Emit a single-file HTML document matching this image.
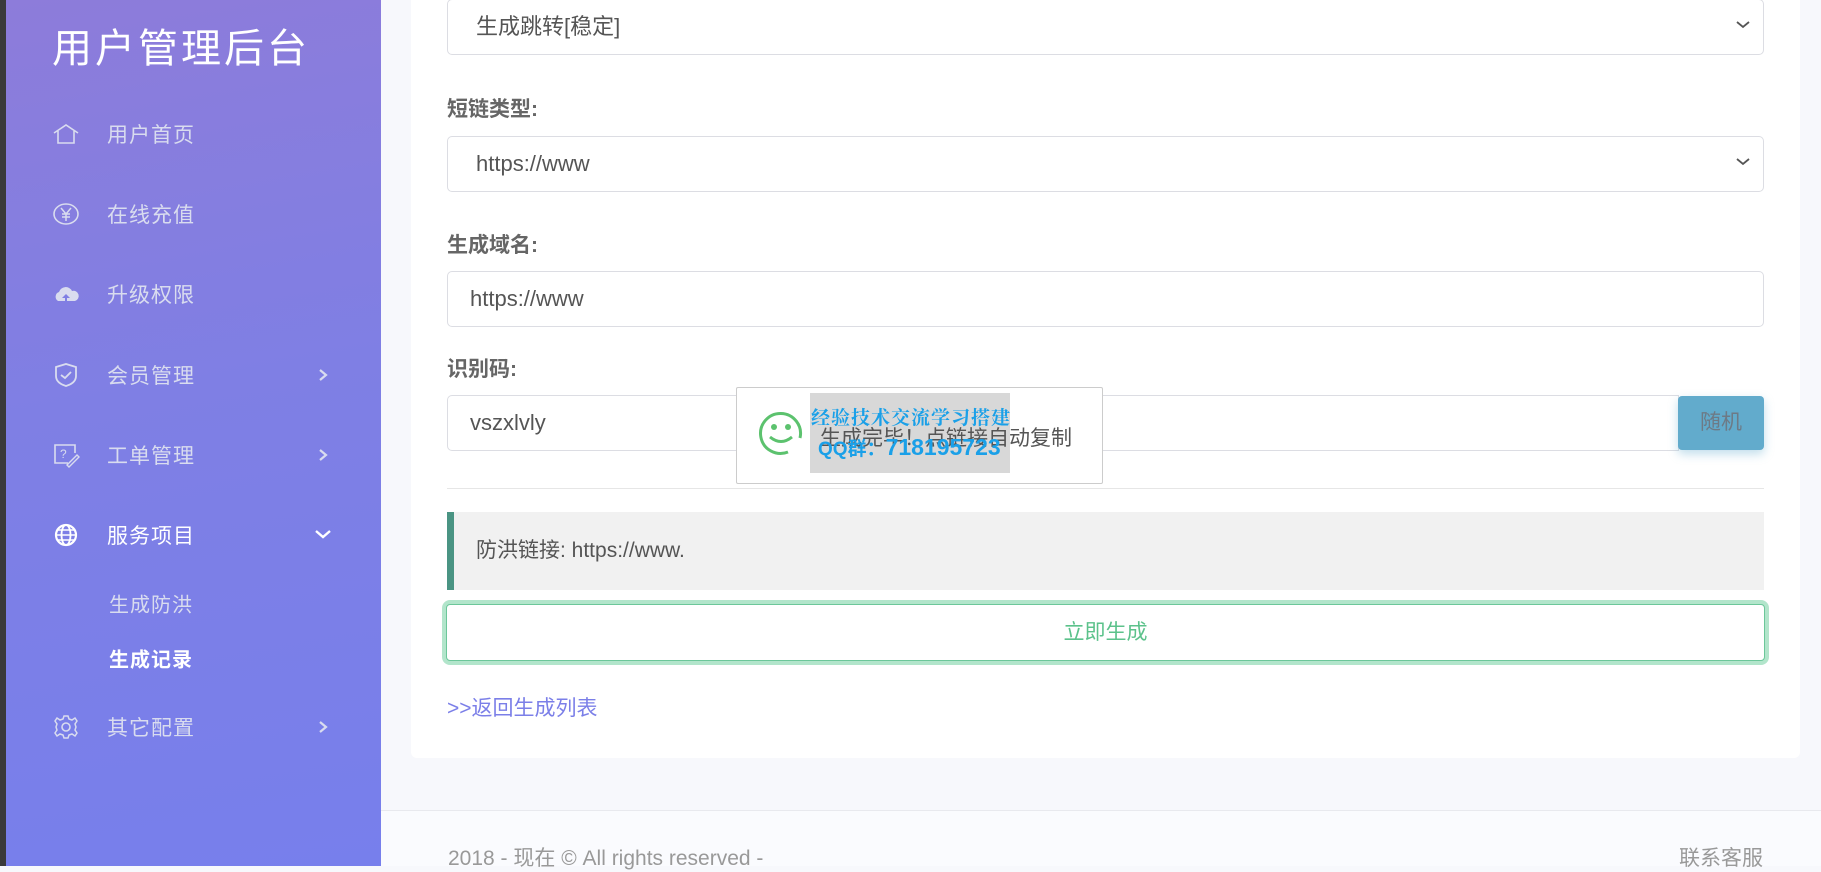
<!DOCTYPE html>
<html><head><meta charset="utf-8"><style>
*{box-sizing:border-box;margin:0;padding:0}
body{width:1821px;height:866px;overflow:hidden;background:#f7f8fc;font-family:"Liberation Sans","Noto Sans CJK SC",sans-serif;position:relative}
.strip{position:absolute;left:0;top:0;width:6px;height:866px;background:#3a3a3a}
.side{position:absolute;left:6px;top:0;width:375px;height:866px;background:linear-gradient(170deg,#8d7cda 0%,#7f7fe4 45%,#777fec 100%)}
.title{position:absolute;left:46px;top:16px;font-size:40px;color:#fff;letter-spacing:3px;white-space:nowrap}
.mi{position:absolute;left:101px;font-size:21px;color:#d9dcef;letter-spacing:1px;transform:translateY(-50%);white-space:nowrap}
.mi.act{color:#fff}
.ic{position:absolute;left:52px;transform:translateY(-50%)}
.chev{position:absolute;left:312px;transform:translateY(-50%)}
.card{position:absolute;left:411px;top:-10px;width:1389px;height:768px;background:#fff;border-radius:6px}
.fld{position:absolute;left:447px;width:1317px;height:56px;border:1px solid #dcdde3;border-radius:5px;background:#fff;font-size:22px;color:#555;padding-left:28px;line-height:54px}
.lbl{position:absolute;left:447px;font-size:21px;font-weight:bold;color:#666}
.arr{position:absolute;right:12px;top:20px}
</style></head><body>
<div class="strip"></div>
<div class="side">
<div class="title">用户管理后台</div>
</div>
<div style="position:absolute;left:0;top:0">
<svg class="ic" style="top:134px" width="28" height="24" viewBox="0 0 28 24"><path d="M2 11 L14 3 L26 11 M6 9 V21 H22 V9" fill="none" stroke="#d9dcef" stroke-width="1.6"/></svg>
<div class="mi" style="top:134px;left:107px">用户首页</div>
<svg class="ic" style="top:214px" width="28" height="28" viewBox="0 0 28 28"><ellipse cx="14" cy="14" rx="12" ry="10" fill="none" stroke="#d9dcef" stroke-width="1.6"/><path d="M9 8 L14 14 L19 8 M14 14 V21 M10 14 H18 M10 17 H18" fill="none" stroke="#d9dcef" stroke-width="1.5"/></svg>
<div class="mi" style="top:214px;left:107px">在线充值</div>
<svg class="ic" style="top:294px" width="28" height="22" viewBox="0 0 28 22"><path d="M6 18 A5 5 0 0 1 7 9 A7 7 0 0 1 20 8 A5 5 0 0 1 23 18 Z" fill="#d9dcef"/><path d="M14 11 L10 15 H13 V20 H15 V15 H18 Z" fill="#7f7fe4"/></svg>
<div class="mi" style="top:294px;left:107px">升级权限</div>
<svg class="ic" style="top:375px" width="28" height="28" viewBox="0 0 28 28"><path d="M4 6 L14 3 L24 6 V15 Q24 22 14 25 Q4 22 4 15 Z" fill="none" stroke="#d9dcef" stroke-width="1.8"/><path d="M9 14 L13 17 L19 11" fill="none" stroke="#d9dcef" stroke-width="1.8"/></svg>
<div class="mi" style="top:375px;left:107px">会员管理</div>
<svg class="chev" style="top:375px;left:316px" width="14" height="16" viewBox="0 0 14 16"><path d="M4 3 L10 8 L4 13" fill="none" stroke="#d9dcef" stroke-width="2.2"/></svg>
<svg class="ic" style="top:455px" width="28" height="28" viewBox="0 0 28 28"><path d="M16 22 H3 V4 H23 V12" fill="none" stroke="#d9dcef" stroke-width="1.6"/><text x="8" y="17" font-size="12" fill="#d9dcef" font-family="Liberation Sans">?</text><path d="M15 24 L25 14 L27 16 L17 26 Z" fill="none" stroke="#d9dcef" stroke-width="1.4"/></svg>
<div class="mi" style="top:455px;left:107px">工单管理</div>
<svg class="chev" style="top:455px;left:316px" width="14" height="16" viewBox="0 0 14 16"><path d="M4 3 L10 8 L4 13" fill="none" stroke="#d9dcef" stroke-width="2.2"/></svg>
<svg class="ic" style="top:535px" width="28" height="28" viewBox="0 0 28 28"><circle cx="14" cy="14" r="10" fill="none" stroke="#fff" stroke-width="2.2"/><ellipse cx="14" cy="14" rx="4.5" ry="10" fill="none" stroke="#fff" stroke-width="1.8"/><path d="M4 14 H24 M6 9 H22 M6 19 H22" stroke="#fff" stroke-width="1.6"/></svg>
<div class="mi act" style="top:535px;left:107px">服务项目</div>
<svg class="chev" style="top:535px;left:313px" width="20" height="14" viewBox="0 0 20 14"><path d="M3 3 L10 9 L17 3" fill="none" stroke="#fff" stroke-width="2.4"/></svg>
<div class="mi" style="top:603px;left:109px;font-size:20px">生成防洪</div>
<div class="mi act" style="top:658px;left:109px;font-size:20px;font-weight:bold">生成记录</div>
<svg class="ic" style="top:727px" width="28" height="28" viewBox="0 0 28 28"><circle cx="14" cy="14" r="4" fill="none" stroke="#d9dcef" stroke-width="1.6"/><path d="M12 3 H16 L17 6 L20 7 L23 5 L25 8 L23 11 L24 14 L23 17 L25 20 L23 23 L20 21 L17 22 L16 25 H12 L11 22 L8 21 L5 23 L3 20 L5 17 L4 14 L5 11 L3 8 L5 5 L8 7 L11 6 Z" fill="none" stroke="#d9dcef" stroke-width="1.5"/></svg>
<div class="mi" style="top:727px;left:107px">其它配置</div>
<svg class="chev" style="top:727px;left:316px" width="14" height="16" viewBox="0 0 14 16"><path d="M4 3 L10 8 L4 13" fill="none" stroke="#d9dcef" stroke-width="2.2"/></svg>
</div>

<div class="card"></div>
<div class="fld" style="top:-1px">生成跳转[稳定]<svg class="arr" width="16" height="10" viewBox="0 0 16 10"><path d="M2 2 L8 7 L14 2" fill="none" stroke="#555" stroke-width="1.8"/></svg></div>
<div class="lbl" style="top:93px">短链类型:</div>
<div class="fld" style="top:136px">https://www<svg class="arr" width="16" height="10" viewBox="0 0 16 10"><path d="M2 2 L8 7 L14 2" fill="none" stroke="#555" stroke-width="1.8"/></svg></div>
<div class="lbl" style="top:229px">生成域名:</div>
<div class="fld" style="top:271px;padding-left:22px">https://www</div>
<div class="lbl" style="top:353px">识别码:</div>
<div class="fld" style="top:395px;width:1232px;padding-left:22px;border-radius:5px 0 0 5px">vszxlvly</div>
<div style="position:absolute;left:1678px;top:396px;width:86px;height:54px;background:#62abcc;border-radius:4px;color:#6d7a86;font-size:21px;text-align:center;line-height:54px;box-shadow:0 4px 10px rgba(98,171,204,.4)">随机</div>
<div style="position:absolute;left:447px;top:488px;width:1317px;height:1px;background:#e6e6e6"></div>
<div style="position:absolute;left:447px;top:512px;width:1317px;height:78px;background:#f1f1f1;border-left:7px solid #4a9483;font-size:21px;color:#555;padding-left:22px;line-height:78px">防洪链接: https://www.</div>
<div style="position:absolute;left:446px;top:604px;width:1319px;height:57px;border:1px solid #6cc79a;border-radius:4px;box-shadow:0 0 0 4px #b2e5cb;background:#fff;color:#5cc28b;font-size:21px;text-align:center;line-height:55px">立即生成</div>
<div style="position:absolute;left:447px;top:692px;font-size:21px;color:#7b7fe8">&gt;&gt;返回生成列表</div>
<div style="position:absolute;left:381px;top:810px;width:1440px;height:56px;background:#fafbfe;border-top:1px solid #e8e9ee"></div>
<div style="position:absolute;left:448px;top:842px;font-size:21px;color:#999">2018 - 现在 © All rights reserved -</div>
<div style="position:absolute;left:1679px;top:842px;font-size:21px;color:#999">联系客服</div>

<div style="position:absolute;left:736px;top:387px;width:367px;height:97px;background:#fff;border:1px solid #ccc;border-radius:2px"></div>
<svg style="position:absolute;left:758px;top:410px" width="46" height="46" viewBox="0 0 46 46"><path d="M30 42 A20 20 0 1 1 42 28" fill="none" stroke="#5cc26e" stroke-width="3"/><circle cx="16" cy="17" r="3" fill="#5cc26e"/><circle cx="30" cy="17" r="3" fill="#5cc26e"/><path d="M12 27 Q23 36 34 27" fill="none" stroke="#5cc26e" stroke-width="3"/></svg>
<div style="position:absolute;left:810px;top:393px;width:200px;height:80px;background:#d8d8d8"></div>
<div style="position:absolute;left:820px;top:422px;font-size:21px;color:#555;white-space:nowrap">生成完毕！点链接自动复制</div>
<div style="position:absolute;left:811px;top:403px;font-size:19px;font-weight:bold;color:#1aa0e8;font-family:'Liberation Serif','Noto Serif CJK SC',serif;white-space:nowrap;letter-spacing:1px">经验技术交流学习搭建</div>
<div style="position:absolute;left:818px;top:434px;font-size:19px;font-weight:bold;color:#1aa0e8;white-space:nowrap">QQ群：<span style="font-size:23px">718195723</span></div>
</body></html>
